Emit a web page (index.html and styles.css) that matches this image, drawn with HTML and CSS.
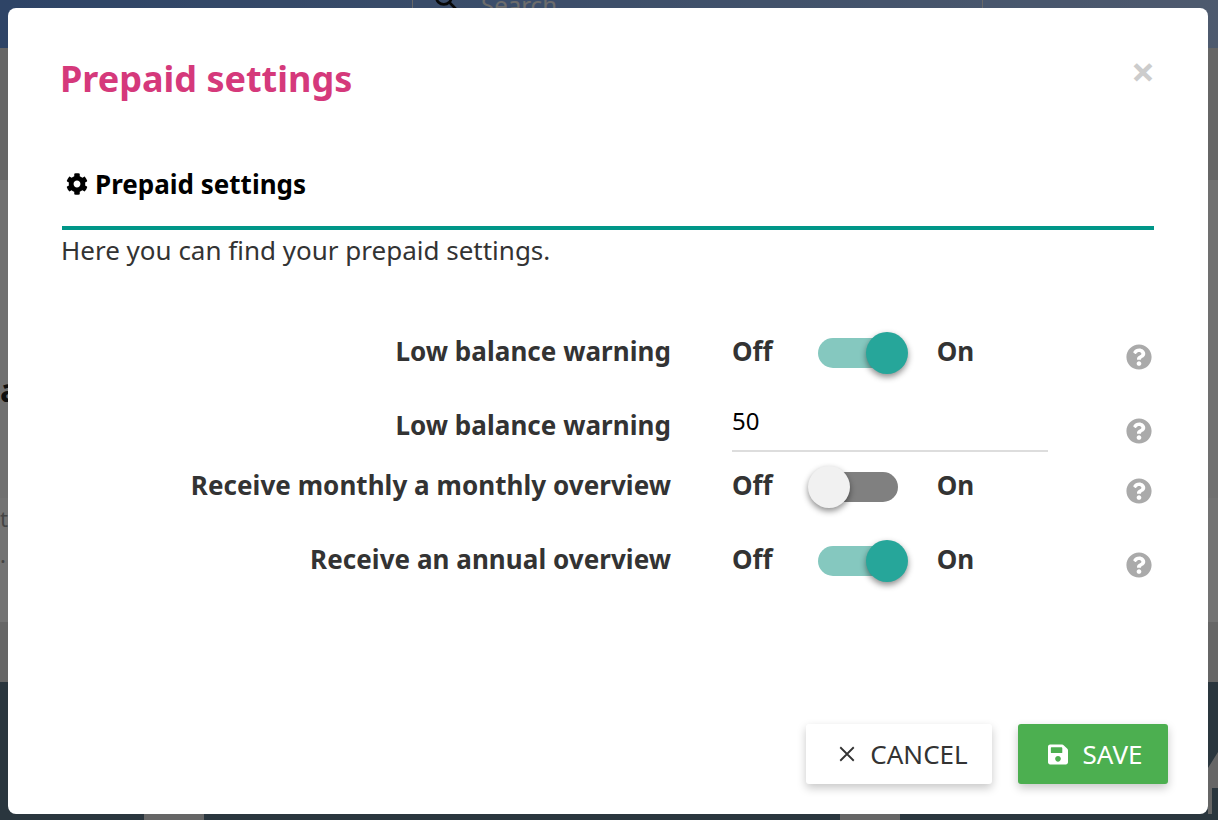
FILE: index.html
```html
<!DOCTYPE html>
<html lang="en">
<head>
    <meta charset="UTF-8">
    <meta name="viewport" content="width=device-width, initial-scale=1.0">
    <title>Prepaid settings</title>
    <link rel="stylesheet" href="styles.css">
</head>
<body>

<div class="page">
    <header class="topbar">
        <div class="search">
            <svg class="search-icon" viewBox="0 0 24 24"><circle cx="10" cy="10" r="7"/><line x1="15" y1="15" x2="22" y2="22"/></svg>
            <span>Search</span>
        </div>
    </header>
    <div class="content">
        <div class="content-head"></div>
        <div class="content-title">a</div>
        <div class="content-row">
            <span class="content-text">t</span>
            <span class="content-text">.</span>
        </div>
        <div class="content-end"></div>
    </div>
    <footer class="footer">
        <div class="footer-tab footer-tab-left"></div>
        <div class="footer-tab footer-tab-right"></div>
        <div class="footer-shape"></div>
    </footer>
</div>

<div class="overlay"></div>

<div class="modal">
    <button class="close">×</button>
    <h2 class="modal-title">Prepaid settings</h2>

    <h3 class="section-title">
        <svg class="cog" viewBox="0 0 512 512"><path d="M487.4 315.7l-42.6-24.6c4.3-23.2 4.3-47 0-70.2l42.6-24.6c4.9-2.8 7.1-8.6 5.5-14-11.1-35.6-30-67.8-54.7-94.6-3.8-4.1-10-5.1-14.8-2.3L380.8 110c-17.9-15.4-38.5-27.3-60.8-35.1V25.8c0-5.6-3.9-10.5-9.4-11.7-36.7-8.2-74.3-7.8-109.2 0-5.5 1.2-9.4 6.1-9.4 11.7V75c-22.2 7.9-42.8 19.8-60.8 35.1L88.7 85.5c-4.9-2.8-11-1.9-14.8 2.3-24.7 26.7-43.6 58.9-54.7 94.6-1.7 5.4.6 11.2 5.5 14L67.3 221c-4.3 23.2-4.3 47 0 70.2l-42.6 24.6c-4.9 2.8-7.1 8.6-5.5 14 11.1 35.6 30 67.8 54.7 94.6 3.8 4.1 10 5.1 14.8 2.3l42.6-24.6c17.9 15.4 38.5 27.3 60.8 35.1v49.2c0 5.6 3.9 10.5 9.4 11.7 36.7 8.2 74.3 7.8 109.2 0 5.5-1.2 9.4-6.1 9.4-11.7v-49.2c22.2-7.9 42.8-19.8 60.8-35.1l42.6 24.6c4.9 2.8 11 1.9 14.8-2.3 24.7-26.7 43.6-58.9 54.7-94.6 1.5-5.5-.7-11.3-5.6-14.1zM256 336c-44.1 0-80-35.9-80-80s35.9-80 80-80 80 35.9 80 80-35.9 80-80 80z"/></svg>
        Prepaid settings
    </h3>
    <p class="section-text">Here you can find your prepaid settings.</p>

    <div class="settings">
        <div class="row row-switch">
            <label class="row-label">Low balance warning</label>
            <div class="row-control">
                <span class="switch-text">Off</span>
                <span class="switch switch-on"><span class="knob"></span></span>
                <span class="switch-text">On</span>
            </div>
            <svg class="help" viewBox="0 0 512 512"><path d="M504 256c0 136.997-111.043 248-248 248S8 392.997 8 256C8 119.083 119.043 8 256 8s248 111.083 248 248zM262.655 90c-54.497 0-89.255 22.957-116.549 63.758-3.536 5.286-2.353 12.415 2.715 16.258l34.699 26.31c5.205 3.947 12.621 3.008 16.665-2.122 17.864-22.658 30.113-35.797 57.303-35.797 20.429 0 45.698 13.148 45.698 32.958 0 14.976-12.363 22.667-32.534 33.976C247.128 238.528 216 254.941 216 296v4c0 6.627 5.373 12 12 12h56c6.627 0 12-5.373 12-12v-1.333c0-28.462 83.186-29.647 83.186-106.667 0-58.002-60.165-102-116.531-102zM256 338c-25.365 0-46 20.635-46 46 0 25.364 20.635 46 46 46s46-20.636 46-46c0-25.365-20.635-46-46-46z"/></svg>
        </div>
        <div class="row row-input">
            <label class="row-label">Low balance warning</label>
            <div class="row-control">
                <input class="amount" type="text" value="50">
            </div>
            <svg class="help" viewBox="0 0 512 512"><path d="M504 256c0 136.997-111.043 248-248 248S8 392.997 8 256C8 119.083 119.043 8 256 8s248 111.083 248 248zM262.655 90c-54.497 0-89.255 22.957-116.549 63.758-3.536 5.286-2.353 12.415 2.715 16.258l34.699 26.31c5.205 3.947 12.621 3.008 16.665-2.122 17.864-22.658 30.113-35.797 57.303-35.797 20.429 0 45.698 13.148 45.698 32.958 0 14.976-12.363 22.667-32.534 33.976C247.128 238.528 216 254.941 216 296v4c0 6.627 5.373 12 12 12h56c6.627 0 12-5.373 12-12v-1.333c0-28.462 83.186-29.647 83.186-106.667 0-58.002-60.165-102-116.531-102zM256 338c-25.365 0-46 20.635-46 46 0 25.364 20.635 46 46 46s46-20.636 46-46c0-25.365-20.635-46-46-46z"/></svg>
        </div>
        <div class="row row-switch">
            <label class="row-label">Receive monthly a monthly overview</label>
            <div class="row-control">
                <span class="switch-text">Off</span>
                <span class="switch"><span class="knob"></span></span>
                <span class="switch-text">On</span>
            </div>
            <svg class="help" viewBox="0 0 512 512"><path d="M504 256c0 136.997-111.043 248-248 248S8 392.997 8 256C8 119.083 119.043 8 256 8s248 111.083 248 248zM262.655 90c-54.497 0-89.255 22.957-116.549 63.758-3.536 5.286-2.353 12.415 2.715 16.258l34.699 26.31c5.205 3.947 12.621 3.008 16.665-2.122 17.864-22.658 30.113-35.797 57.303-35.797 20.429 0 45.698 13.148 45.698 32.958 0 14.976-12.363 22.667-32.534 33.976C247.128 238.528 216 254.941 216 296v4c0 6.627 5.373 12 12 12h56c6.627 0 12-5.373 12-12v-1.333c0-28.462 83.186-29.647 83.186-106.667 0-58.002-60.165-102-116.531-102zM256 338c-25.365 0-46 20.635-46 46 0 25.364 20.635 46 46 46s46-20.636 46-46c0-25.365-20.635-46-46-46z"/></svg>
        </div>
        <div class="row row-switch">
            <label class="row-label">Receive an annual overview</label>
            <div class="row-control">
                <span class="switch-text">Off</span>
                <span class="switch switch-on"><span class="knob"></span></span>
                <span class="switch-text">On</span>
            </div>
            <svg class="help" viewBox="0 0 512 512"><path d="M504 256c0 136.997-111.043 248-248 248S8 392.997 8 256C8 119.083 119.043 8 256 8s248 111.083 248 248zM262.655 90c-54.497 0-89.255 22.957-116.549 63.758-3.536 5.286-2.353 12.415 2.715 16.258l34.699 26.31c5.205 3.947 12.621 3.008 16.665-2.122 17.864-22.658 30.113-35.797 57.303-35.797 20.429 0 45.698 13.148 45.698 32.958 0 14.976-12.363 22.667-32.534 33.976C247.128 238.528 216 254.941 216 296v4c0 6.627 5.373 12 12 12h56c6.627 0 12-5.373 12-12v-1.333c0-28.462 83.186-29.647 83.186-106.667 0-58.002-60.165-102-116.531-102zM256 338c-25.365 0-46 20.635-46 46 0 25.364 20.635 46 46 46s46-20.636 46-46c0-25.365-20.635-46-46-46z"/></svg>
        </div>
    </div>

    <div class="actions">
        <button class="btn btn-cancel">
            <svg class="btn-x" viewBox="0 0 16 16"><path d="M2 2l12 12M14 2L2 14"/></svg>
            CANCEL
        </button>
        <button class="btn btn-save">
            <svg class="btn-save-icon" viewBox="0 0 448 512"><path d="M433.941 129.941l-83.882-83.882A48 48 0 0 0 316.118 32H48C21.49 32 0 53.49 0 80v352c0 26.51 21.49 48 48 48h352c26.51 0 48-21.49 48-48V163.882a48 48 0 0 0-14.059-33.941zM224 416c-35.346 0-64-28.654-64-64 0-35.346 28.654-64 64-64s64 28.654 64 64c0 35.346-28.654 64-64 64zm96-304.52V212c0 6.627-5.373 12-12 12H76c-6.627 0-12-5.373-12-12V108c0-6.627 5.373-12 12-12h228.52c3.183 0 6.235 1.264 8.485 3.515l3.48 3.48A11.996 11.996 0 0 1 320 111.48z"/></svg>
            SAVE
        </button>
    </div>
</div>

</body>
</html>
```

FILE: styles.css
```css
html, body {
    margin: 0;
    height: 100%;
    overflow: hidden;
}
body {
    font-family: "Noto Sans", "Open Sans", sans-serif;
    color: #333;
    background-color: #fff;
}

/* page behind the modal */
.page {
    height: 820px;
    display: flex;
    flex-direction: column;
}
.topbar {
    height: 48px;
    flex: none;
    background: linear-gradient(to right, #6697e3, #adc8f4);
    padding-left: 412px;
}
.search {
    width: 571px;
    height: 48px;
    box-sizing: border-box;
    border-left: 1px solid #e6e6e6;
    border-right: 1px solid #e6e6e6;
    display: flex;
    gap: 22px;
    padding-left: 20px;
    color: #f0f0f0;
    font-size: 24px;
    line-height: 10px;
}
.search-icon {
    width: 26px;
    height: 26px;
    margin-top: -14px;
    fill: none;
    stroke: #111;
    stroke-width: 2.5;
}
.content {
    flex: 1;
    background-color: #f9f9f9;
    color: #222;
}
.content-head {
    height: 132px;
    background-color: #e3e3e3;
}
.content-title {
    height: 318px;
    font-size: 32px;
    font-weight: 700;
    line-height: 36px;
    padding-top: 192px;
    box-sizing: border-box;
}
.content-row {
    height: 124px;
    box-sizing: border-box;
    padding-top: 2px;
    background-color: #fff;
    color: #999;
}
.content-text {
    display: block;
    font-size: 22px;
    line-height: 36px;
}
.content-end {
    height: 60px;
    background-color: #e3e3e3;
}
.footer {
    height: 138px;
    flex: none;
    background-color: #5d788a;
    position: relative;
}
.footer-tab {
    position: absolute;
    bottom: 0;
    height: 6px;
    width: 60px;
    background-color: #e3e3e3;
}
.footer-tab-left {
    left: 144px;
}
.footer-tab-right {
    left: 840px;
}
.footer-shape {
    position: absolute;
    right: 0;
    top: 70px;
    width: 10px;
    height: 62px;
    background-color: #e3e3e3;
    clip-path: polygon(0 16px, 100% 0, 100% 36px, 40% 36px, 40% 100%, 0 100%);
}
.overlay {
    position: fixed;
    inset: 0;
    background-color: rgba(0, 0, 0, 0.55);
}

/* modal */
.modal {
    position: fixed;
    left: 8px;
    top: 8px;
    width: 1200px;
    height: 806px;
    box-sizing: border-box;
    background-color: #fff;
    border-radius: 8px;
    padding: 46px 40px 30px 52px;
    display: flex;
    flex-direction: column;
}
.close {
    position: absolute;
    right: 53px;
    top: 39px;
    border: none;
    background: none;
    padding: 0;
    font-family: inherit;
    font-size: 42px;
    font-weight: 700;
    line-height: 48px;
    color: #ccc;
}
.modal-title {
    margin: 0;
    font-size: 36px;
    font-weight: 700;
    line-height: 50px;
    color: #d5397b;
}
.section-title {
    margin: 62px 0 0 2px;
    height: 60px;
    border-bottom: 4px solid #009688;
    width: 1092px;
    font-size: 26px;
    font-weight: 700;
    line-height: 36px;
    color: #000;
    display: flex;
    gap: 7px;
}
.cog {
    width: 22px;
    height: 22px;
    margin: 7px 0 0 4px;
    fill: #000;
}
.section-text {
    margin: 2px 0 0 1px;
    font-size: 26px;
    line-height: 36px;
    color: #333;
}
.settings {
    margin-top: 49px;
}
.row {
    display: grid;
    grid-template-columns: 611px 455px 30px;
}
.row-switch {
    height: 74px;
}
.row-input {
    height: 60px;
}
.row-label {
    font-size: 26px;
    font-weight: 700;
    line-height: 68px;
    text-align: right;
    letter-spacing: 0.05px;
    color: #333;
}
.row-control {
    display: flex;
    align-items: flex-start;
    padding-left: 61px;
}
.switch-text {
    font-size: 26px;
    font-weight: 700;
    line-height: 68px;
    color: #333;
}
.switch {
    width: 80px;
    height: 30px;
    margin: 21px 39px 0 45px;
    border-radius: 15px;
    background-color: #808080;
    display: flex;
    align-items: center;
    flex: none;
}
.knob {
    width: 42px;
    height: 42px;
    flex: none;
    border-radius: 50%;
    background-color: #f1f1f1;
    margin-left: -10px;
    box-shadow: 0 3px 6px rgba(0, 0, 0, 0.45);
}
.switch-on {
    background-color: #85c8bf;
    justify-content: flex-end;
}
.switch-on .knob {
    background-color: #26a69a;
    margin-right: -10px;
}
.amount {
    width: 316px;
    height: 61px;
    box-sizing: border-box;
    border: none;
    border-bottom: 2px solid #ddd;
    outline: none;
    padding: 0;
    font-family: inherit;
    font-size: 24px;
    color: #000;
}
.help {
    width: 26px;
    height: 26px;
    margin-top: 27px;
    fill: #aaa;
}
.actions {
    margin-top: auto;
    display: flex;
    justify-content: flex-end;
    gap: 26px;
}
.btn {
    height: 60px;
    border: none;
    border-radius: 3px;
    font-family: inherit;
    font-size: 26px;
    display: flex;
    align-items: center;
    justify-content: center;
    box-shadow: 0 4px 10px rgba(0, 0, 0, 0.22);
}
.btn-cancel {
    width: 186px;
    gap: 14px;
    padding: 0 0 0 8px;
    background-color: #fff;
    color: #333;
}
.btn-x {
    width: 18px;
    height: 18px;
    fill: none;
    stroke: #333;
    stroke-width: 1.6;
}
.btn-save {
    width: 150px;
    gap: 15px;
    padding: 0 0 0 4px;
    background-color: #4caf50;
    color: #fff;
}
.btn-save-icon {
    width: 20px;
    height: 23px;
    fill: #fff;
}
```
